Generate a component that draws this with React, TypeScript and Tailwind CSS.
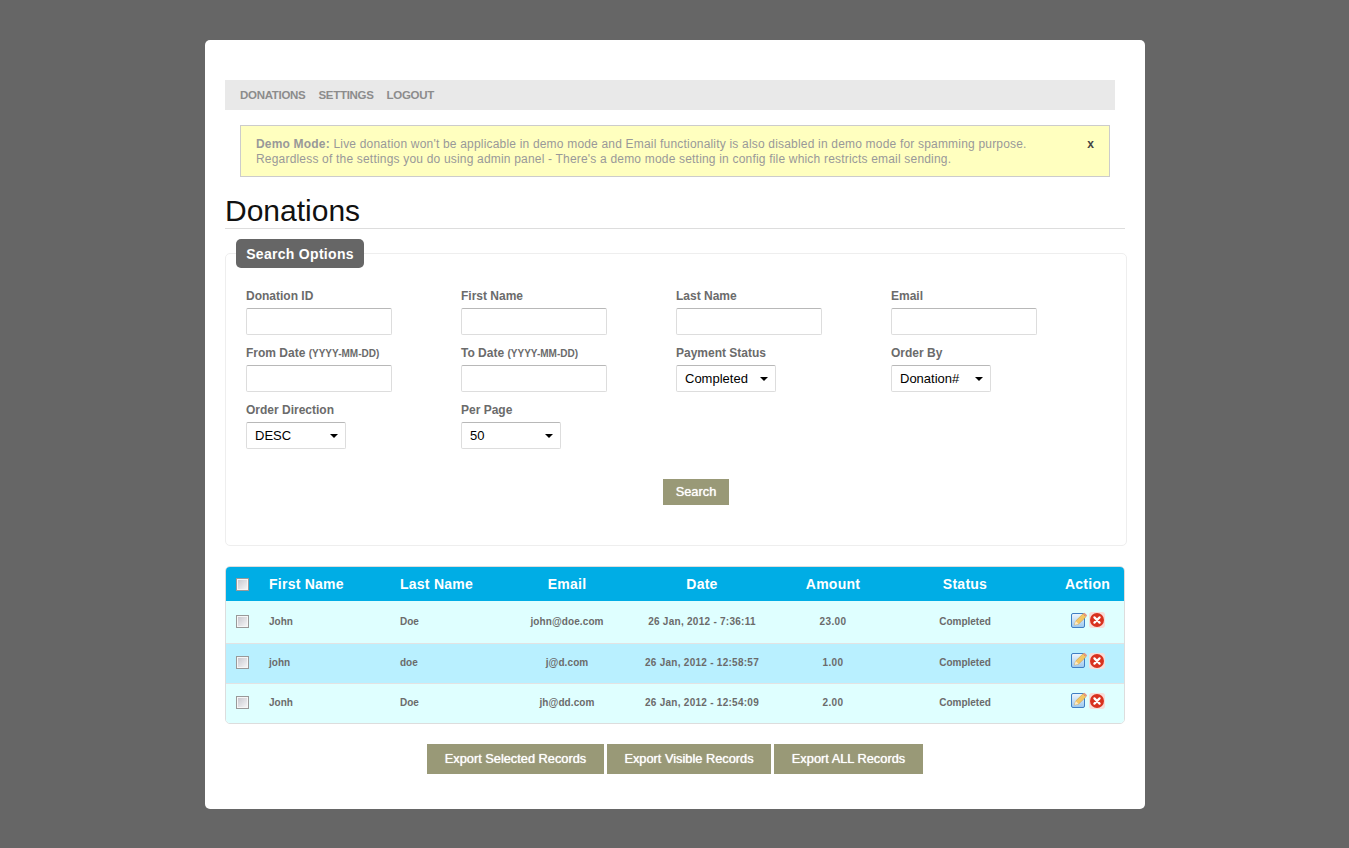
const rows = [
  { first: "John", last: "Doe", email: "john@doe.com", date: "26 Jan, 2012 - 7:36:11", amount: "23.00", h: "h-[42px]", bg: "bg-[#dfffff]" },
  { first: "john", last: "doe", email: "j@d.com", date: "26 Jan, 2012 - 12:58:57", amount: "1.00", h: "h-[40px] [&>td]:pb-[2px]", bg: "bg-[#b9f0ff]" },
  { first: "Jonh", last: "Doe", email: "jh@dd.com", date: "26 Jan, 2012 - 12:54:09", amount: "2.00", h: "h-[40px] [&>td]:pb-[2px]", bg: "bg-[#dfffff]" },
];

const Field = ({ label, hint }: { label: string; hint?: string }) => (
  <div className="w-[215px]">
    <label className="block h-[15px] mb-1 text-[12px] leading-[15px] font-bold text-[#6b6b6b]">
      {label} {hint && <span className="text-[10px]">{hint}</span>}
    </label>
    <input className="block w-[146px] h-[27px] bg-white border border-[#ddd] border-t-[#b8b8b8] rounded-[2px] outline-none" />
  </div>
);

const SelectField = ({ label, value }: { label: string; value: string }) => (
  <div className="w-[215px]">
    <label className="block h-[15px] mb-1 text-[12px] leading-[15px] font-bold text-[#6b6b6b]">{label}</label>
    <div className="relative w-[100px] h-[27px] bg-white border border-[#ddd] border-t-[#b8b8b8] rounded-[2px] pl-2 text-[13px] leading-[25px] text-black">
      {value}
      <span className="absolute right-[7px] top-[11px] w-0 h-0 border-x-[4px] border-x-transparent border-t-[4px] border-t-black" />
    </div>
  </div>
);

const Checkbox = () => (
  <input
    type="checkbox"
    className="block appearance-none w-[13px] h-[13px] border border-[#999] bg-gradient-to-br from-[#c4c4cc] to-[#fafafa] shadow-[inset_0_0_0_1px_#f6f6f6]"
  />
);

const EditIcon = () => (
  <svg width="16" height="17" viewBox="0 0 16 17" className="shrink-0">
    <defs>
      <linearGradient id="paper" x1="0" y1="0" x2="0" y2="1">
        <stop offset="0" stopColor="#f2f7fd" />
        <stop offset="1" stopColor="#9cc8ee" />
      </linearGradient>
    </defs>
    <rect x="0.5" y="1.5" width="13" height="14" rx="1.5" fill="url(#paper)" stroke="#3f7fc4" />
    <path d="M3.5 13l1.2-4L12 1.8l3 3L7.7 12z" fill="#f3c765" stroke="#c9973a" strokeWidth="0.5" />
    <path d="M3.5 13l1.2-4 3 3z" fill="#f9ebcd" />
    <path d="M12 1.8l3 3 0.6-0.6a1 1 0 0 0 0-1.4l-1.6-1.6a1 1 0 0 0-1.4 0z" fill="#e8967f" />
  </svg>
);

const DeleteIcon = () => (
  <svg width="16" height="16" viewBox="0 0 16 16" className="shrink-0">
    <rect width="16" height="16" rx="3" fill="#f9dcd8" />
    <circle cx="8" cy="8" r="7" fill="#d8321f" />
    <path d="M5.4 5.4l5.2 5.2M10.6 5.4l-5.2 5.2" stroke="#fff" strokeWidth="2.2" strokeLinecap="round" />
  </svg>
);

const App = () => {
  return (
    <div className="min-h-[848px] bg-[#666] pt-10 pl-px font-['Liberation_Sans',Arial,sans-serif]">
      <div className="mx-auto w-[940px] h-[769px] bg-white rounded-[5px] pt-10 px-5">
        {/* Nav bar */}
        <nav className="flex items-center gap-[13px] w-[890px] h-[30px] bg-[#e9e9e9] px-[15px] pt-px text-[11.5px] tracking-[-0.3px] font-bold uppercase text-[#8c8c8c]">
          <a>Donations</a>
          <a>Settings</a>
          <a>Logout</a>
        </nav>

        {/* Demo notice */}
        <div className="flex justify-between mt-[15px] mx-[15px] w-[870px] h-[52px] border border-[#ccc] bg-[#ffffbf] pt-[11px] pl-[15px] pr-[15px] text-[12px] leading-[15px] tracking-[0.19px] text-[#999]">
          <p>
            <b>Demo Mode:</b> Live donation won't be applicable in demo mode and Email functionality is also disabled in demo mode for spamming purpose.
            <br />
            Regardless of the settings you do using admin panel - There's a demo mode setting in config file which restricts email sending.
          </p>
          <span className="font-bold text-[#444]">x</span>
        </div>

        <h1 className="mt-[14px] h-[38px] border-b border-[#ddd] text-[30px] leading-[40px] text-[#111]">Donations</h1>

        {/* Search options */}
        <div className="relative mt-6 w-[902px] h-[293px] border border-[#eee] rounded-[5px] pt-[35px] pl-5">
          <div className="absolute -top-[15px] left-[10px] h-[29px] w-[128px] rounded-[5px] bg-[#666] text-center text-[14px] leading-[31px] font-bold tracking-[0.3px] text-white">
            Search Options
          </div>
          <div className="flex">
            <Field label="Donation ID" />
            <Field label="First Name" />
            <Field label="Last Name" />
            <Field label="Email" />
          </div>
          <div className="flex mt-[11px]">
            <Field label="From Date" hint="(YYYY-MM-DD)" />
            <Field label="To Date" hint="(YYYY-MM-DD)" />
            <SelectField label="Payment Status" value="Completed" />
            <SelectField label="Order By" value="Donation#" />
          </div>
          <div className="flex mt-[11px]">
            <SelectField label="Order Direction" value="DESC" />
            <SelectField label="Per Page" value="50" />
          </div>
          <div className="flex justify-center mt-[30px] pl-[40px] w-[860px]">
            <button className="w-[66px] h-[26px] bg-[#999977] text-[12.8px] text-white [text-shadow:0_0_1px_#fff]">Search</button>
          </div>
        </div>

        {/* Results */}
        <div className="mt-[20px] w-[900px] border border-[#ddd] rounded-[5px] overflow-hidden">
          <table className="w-full table-fixed border-collapse">
            <colgroup>
              <col className="w-[43px]" />
              <col className="w-[131px]" />
              <col className="w-[100px]" />
              <col className="w-[134px]" />
              <col className="w-[136px]" />
              <col className="w-[126px]" />
              <col className="w-[138px]" />
              <col />
            </colgroup>
            <thead>
              <tr className="h-[34px] bg-[#00ade5] text-[14px] font-bold tracking-[0.25px] text-white">
                <th className="pl-[10px] font-bold"><Checkbox /></th>
                <th className="text-left font-bold">First Name</th>
                <th className="text-left font-bold">Last Name</th>
                <th className="font-bold">Email</th>
                <th className="font-bold">Date</th>
                <th className="font-bold">Amount</th>
                <th className="font-bold">Status</th>
                <th className="pl-[17px] font-bold">Action</th>
              </tr>
            </thead>
            <tbody>
              {rows.map((r, i) => (
                <tr key={i} className={`${r.h} ${r.bg} ${i < 2 ? "border-b border-[#e3e3e3]" : ""} text-[10px] font-bold text-[#6b6b6b] text-center`}>
                  <td className="pl-[10px]"><Checkbox /></td>
                  <td className="text-left">{r.first}</td>
                  <td className="text-left">{r.last}</td>
                  <td className="tracking-[0.1px]">{r.email}</td>
                  <td className="tracking-[0.27px]">{r.date}</td>
                  <td className="tracking-[0.4px]">{r.amount}</td>
                  <td>Completed</td>
                  <td>
                    <div className="flex items-center gap-[2px] pl-[37px] -mt-[3px]">
                      <EditIcon />
                      <DeleteIcon />
                    </div>
                  </td>
                </tr>
              ))}
            </tbody>
          </table>
        </div>

        {/* Export buttons */}
        <div className="flex justify-center gap-[3px] mt-5 w-[900px]">
          <button className="w-[177px] h-[30px] bg-[#999977] text-[12.8px] text-white [text-shadow:0_0_1px_#fff]">Export Selected Records</button>
          <button className="w-[164px] h-[30px] bg-[#999977] text-[12.8px] text-white [text-shadow:0_0_1px_#fff]">Export Visible Records</button>
          <button className="w-[149px] h-[30px] bg-[#999977] text-[12.8px] text-white [text-shadow:0_0_1px_#fff]">Export ALL Records</button>
        </div>
      </div>
    </div>
  );
};

export default App;
